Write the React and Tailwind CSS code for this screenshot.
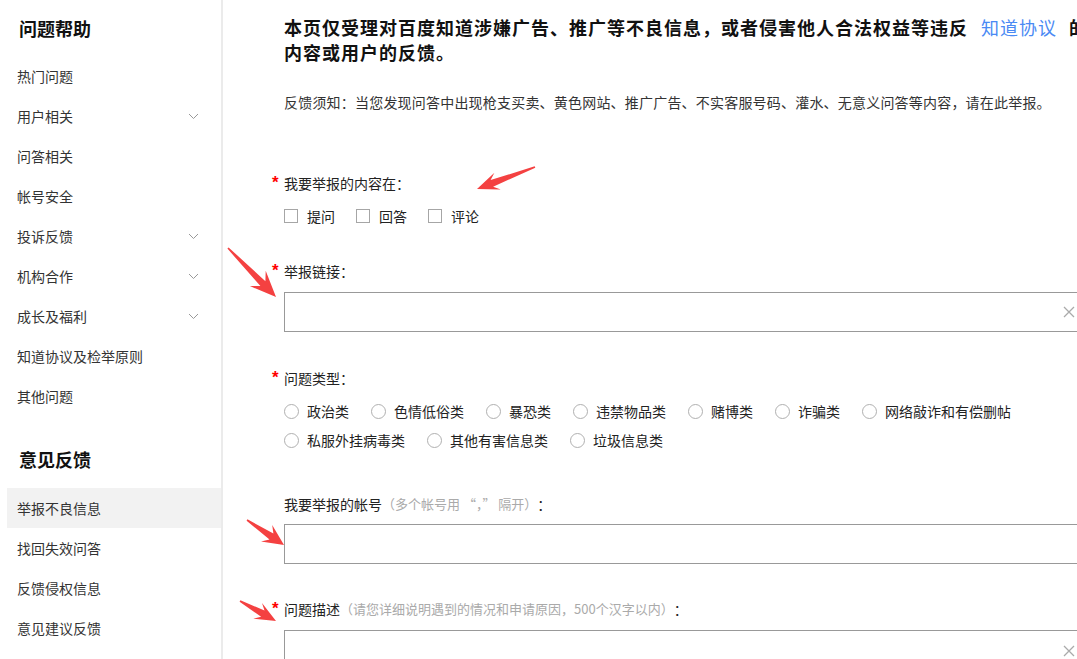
import React from "react";

const font = {
  fontFamily: '"Noto Sans CJK SC", "Noto Sans", sans-serif',
};

const helpMenu = [
  { label: "热门问题" },
  { label: "用户相关", sub: true },
  { label: "问答相关" },
  { label: "帐号安全" },
  { label: "投诉反馈", sub: true },
  { label: "机构合作", sub: true },
  { label: "成长及福利", sub: true },
  { label: "知道协议及检举原则" },
  { label: "其他问题" },
];

const feedbackMenu = [
  { label: "举报不良信息", active: true },
  { label: "找回失效问答" },
  { label: "反馈侵权信息" },
  { label: "意见建议反馈" },
];

const types = [
  "政治类",
  "色情低俗类",
  "暴恐类",
  "违禁物品类",
  "赌博类",
  "诈骗类",
  "网络敲诈和有偿删帖",
  "私服外挂病毒类",
  "其他有害信息类",
  "垃圾信息类",
];

// annotation arrows: [tail, tip, head length, head half width]
const arrows = [
  [[535, 167], [477, 189], 22, 9],
  [[228, 248], [276, 297], 26, 11],
  [[247, 520], [284, 545], 21, 10],
  [[240, 601], [276, 621], 21, 9],
];

const arrowPoints = ([tx, ty], [px, py], L, W) => {
  const len = Math.hypot(px - tx, py - ty);
  const dx = (px - tx) / len;
  const dy = (py - ty) / len;
  const nx = -dy;
  const ny = dx;
  const pt = (x, y) => `${x.toFixed(1)},${y.toFixed(1)}`;
  return [
    pt(px, py),
    pt(px - dx * L + nx * W, py - dy * L + ny * W),
    pt(px - dx * L * 0.72 + nx * 3.5, py - dy * L * 0.72 + ny * 3.5),
    pt(tx + nx * 0.8, ty + ny * 0.8),
    pt(tx - nx * 0.8, ty - ny * 0.8),
    pt(px - dx * L * 0.72 - nx * 3.5, py - dy * L * 0.72 - ny * 3.5),
    pt(px - dx * L - nx * W, py - dy * L - ny * W),
  ].join(" ");
};

const Chevron = () => (
  <svg width="11" height="7" viewBox="0 0 11 7" className="shrink-0">
    <path d="M1 1l4.5 4.5L10 1" fill="none" stroke="#999" strokeWidth="1" />
  </svg>
);

const Close = () => (
  <svg width="12" height="12" viewBox="0 0 12 12" className="shrink-0">
    <path d="M1 1l10 10M11 1L1 11" stroke="#aaa" strokeWidth="1.3" />
  </svg>
);

const Label = ({ required, children, className = "" }) => (
  <div
    className={`h-[20px] flex items-center whitespace-nowrap text-[14px] text-[#222] ${className}`}
  >
    {required && (
      <span
        className="-ml-[12px] w-[12px] text-[17px] leading-[20px] font-bold text-[#f00]"
        style={{ fontFamily: '"Liberation Sans", sans-serif' }}
      >
        *
      </span>
    )}
    {children}
  </div>
);

const App = () => {
  return (
    <div
      className="relative flex w-[1077px] h-[659px] overflow-hidden bg-white"
      style={font}
    >
      {/* Sidebar */}
      <aside className="w-[223px] shrink-0 border-r-2 border-[#ebebeb]">
        <h2 className="h-[56px] pl-[19px] flex items-center text-[18px] font-bold text-[#111]">
          问题帮助
        </h2>
        {helpMenu.map((m) => (
          <div
            key={m.label}
            className="ml-[7px] h-[40px] pl-[10px] pr-[22px] flex items-center justify-between text-[14px] text-[#333]"
          >
            <span>{m.label}</span>
            {m.sub && <Chevron />}
          </div>
        ))}
        <h2 className="mt-[15px] h-[57px] pl-[19px] flex items-center text-[18px] font-bold text-[#111]">
          意见反馈
        </h2>
        {feedbackMenu.map((m) => (
          <div
            key={m.label}
            className={`ml-[7px] h-[40px] pl-[10px] flex items-center text-[14px] text-[#333] ${
              m.active ? "bg-[#f2f2f2]" : ""
            }`}
          >
            {m.label}
          </div>
        ))}
      </aside>

      {/* Main */}
      <main className="pl-[61px] pt-[15px]">
        <div className="w-[800px] shrink-0">
          <h1 className="text-[18px] leading-[25px] tracking-[1px] font-bold text-[#111] whitespace-nowrap">
            本页仅受理对百度知道涉嫌广告、推广等不良信息，或者侵害他人合法权益等违反
            <span className="ml-[13px] mr-[12px] font-normal text-[#4a8af4]">知道协议</span>
            的
            <br />
            内容或用户的反馈。
          </h1>

          <p className="mt-[27px] text-[14px] leading-[20px] tracking-[0.2px] text-[#333] whitespace-nowrap">
            反馈须知：当您发现问答中出现枪支买卖、黄色网站、推广广告、不实客服号码、灌水、无意义问答等内容，请在此举报。
          </p>

          {/* Content type */}
          <Label required className="mt-[61px]">我要举报的内容在：</Label>
          <div className="mt-[13px] h-[20px] flex items-center gap-[21px] text-[14px] text-[#222]">
            {["提问", "回答", "评论"].map((c) => (
              <label key={c} className="flex items-center gap-[9px]">
                <span className="w-[14px] h-[14px] border border-[#a6a6a6] bg-white" />
                {c}
              </label>
            ))}
          </div>

          {/* Link */}
          <Label required className="mt-[35px]">举报链接：</Label>
          <div className="mt-[11px] h-[40px] border border-[#999] flex items-center justify-end pr-[8px]">
            <Close />
          </div>

          {/* Types */}
          <Label required className="mt-[36px]">问题类型：</Label>
          <div className="mt-[13px] flex flex-wrap gap-x-[22px] gap-y-[9px] text-[14px] text-[#222]">
            {types.map((t) => (
              <label key={t} className="h-[20px] flex items-center gap-[8px]">
                <span className="w-[15px] h-[15px] rounded-full border border-[#b0b0b0] bg-white" />
                {t}
              </label>
            ))}
          </div>

          {/* Account */}
          <Label className="mt-[44px]">
            我要举报的帐号
            <span className="text-[13px] text-[#aaa]">（多个帐号用 “，” 隔开）</span>：
          </Label>
          <div className="mt-[10px] h-[40px] border border-[#999]" />

          {/* Description */}
          <Label required className="mt-[35px]">
            问题描述
            <span className="text-[13px] text-[#aaa]">
              （请您详细说明遇到的情况和申请原因，500个汉字以内）
            </span>
            ：
          </Label>
          <div className="mt-[11px] h-[100px] border border-[#999] flex justify-end pt-[14px] pr-[8px]">
            <Close />
          </div>
        </div>
      </main>

      {/* Annotation arrows */}
      <svg
        className="absolute left-0 top-0 pointer-events-none"
        width="1077"
        height="659"
      >
        {arrows.map(([t, p, L, W], i) => (
          <polygon key={i} points={arrowPoints(t, p, L, W)} fill="#f44141" />
        ))}
      </svg>
    </div>
  );
};

export default App;
